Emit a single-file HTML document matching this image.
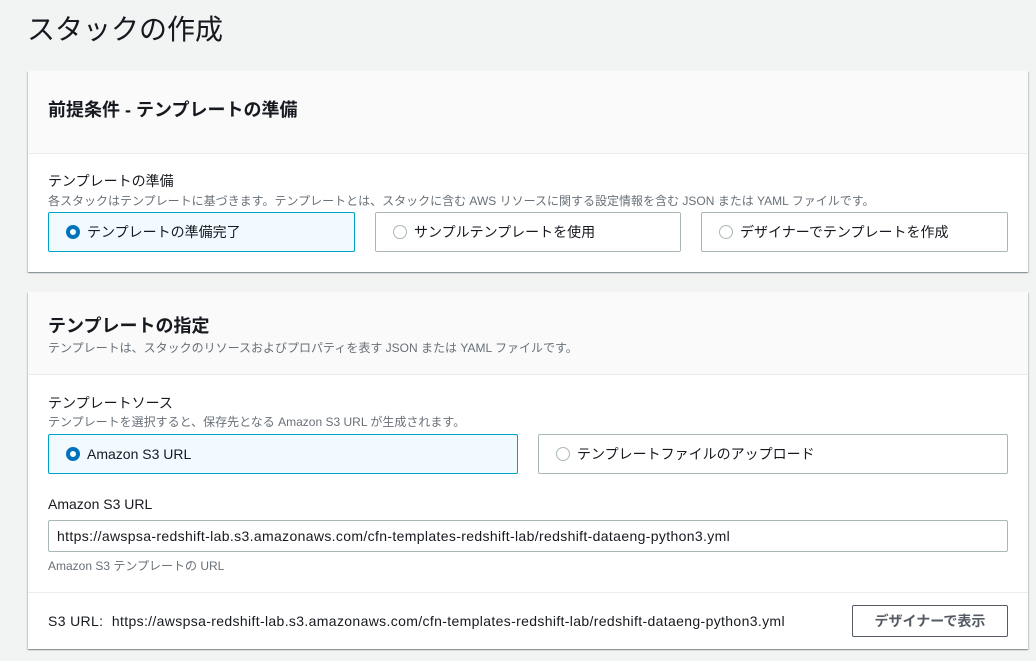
<!DOCTYPE html>
<html><head><meta charset="utf-8"><style>
*{box-sizing:border-box;margin:0;padding:0}
body{width:1036px;height:661px;overflow:hidden;background:#f2f3f3;font-family:"Liberation Sans","Noto Sans CJK JP",sans-serif;color:#16191f;position:relative}
.abs{position:absolute}
h1{position:absolute;left:27px;top:8px;font-size:28px;font-weight:400;color:#16191f;font-family:"Noto Sans CJK JP",sans-serif}
.card{position:absolute;left:28px;width:1000px;background:#fff;box-shadow:0 1px 1px 0 rgba(0,28,36,.3),1px 1px 1px 0 rgba(0,28,36,.15),-1px 1px 1px 0 rgba(0,28,36,.15)}
.hd{position:absolute;left:0;top:0;width:1000px;background:#fafafa;border-bottom:1px solid #eaeded}
.h2{position:absolute;left:20px;font-size:18px;font-weight:700}
.lbl{position:absolute;left:20px;font-size:14px}
.desc{position:absolute;left:20px;font-size:12px;color:#687078}
.tile{position:absolute;height:40px;border:1px solid #aab7b8;border-radius:2px;font-size:14px;line-height:38px;padding-left:38px}
.tile.sel{border-color:#00a1c9;background:#f1faff}
.tile:before{content:"";position:absolute;left:17px;top:12px;width:14px;height:14px;border-radius:50%;border:1px solid #aab7b8;box-sizing:border-box;background:#fff}
.tile.sel:before{border:4px solid #0073bb}
.url{letter-spacing:0.35px}
</style></head><body>
<h1>スタックの作成</h1>
<div class="card" style="top:71px;height:201px">
 <div class="hd" style="height:83px"></div>
 <div class="h2" style="top:25px">前提条件 - テンプレートの準備</div>
 <div class="lbl" style="top:100px">テンプレートの準備</div>
 <div class="desc" style="top:121px">各スタックはテンプレートに基づきます。テンプレートとは、スタックに含む AWS リソースに関する設定情報を含む JSON または YAML ファイルです。</div>
 <div class="tile sel" style="left:20px;top:141px;width:307px">テンプレートの準備完了</div>
 <div class="tile" style="left:347px;top:141px;width:306px">サンプルテンプレートを使用</div>
 <div class="tile" style="left:673px;top:141px;width:307px">デザイナーでテンプレートを作成</div>
</div>
<div class="card" style="top:292px;height:357px">
 <div class="hd" style="height:83px"></div>
 <div class="h2" style="top:20px">テンプレートの指定</div>
 <div class="desc" style="top:47px">テンプレートは、スタックのリソースおよびプロパティを表す JSON または YAML ファイルです。</div>
 <div class="lbl" style="top:101px">テンプレートソース</div>
 <div class="desc" style="top:121px">テンプレートを選択すると、保存先となる Amazon S3 URL が生成されます。</div>
 <div class="tile sel" style="left:20px;top:142px;width:470px">Amazon S3 URL</div>
 <div class="tile" style="left:510px;top:142px;width:470px">テンプレートファイルのアップロード</div>
 <div class="lbl" style="top:204px">Amazon S3 URL</div>
 <div class="abs url" style="left:20px;top:228px;width:960px;height:32px;border:1px solid #aab7b8;border-radius:2px;font-size:14px;line-height:30px;padding-left:8px">https://awspsa-redshift-lab.s3.amazonaws.com/cfn-templates-redshift-lab/redshift-dataeng-python3.yml</div>
 <div class="desc" style="top:265px">Amazon S3 テンプレートの URL</div>
 <div class="abs" style="left:0;top:300px;width:1000px;border-top:1px solid #eaeded"></div>
 <div class="lbl url" style="top:321px">S3 URL:&nbsp; https://awspsa-redshift-lab.s3.amazonaws.com/cfn-templates-redshift-lab/redshift-dataeng-python3.yml</div>
 <div class="abs" style="left:824px;top:313px;width:156px;height:32px;border:1px solid #545b64;border-radius:2px;font-size:14px;line-height:30px;text-align:center;font-weight:700;color:#545b64">デザイナーで表示</div>
</div>
</body></html>
